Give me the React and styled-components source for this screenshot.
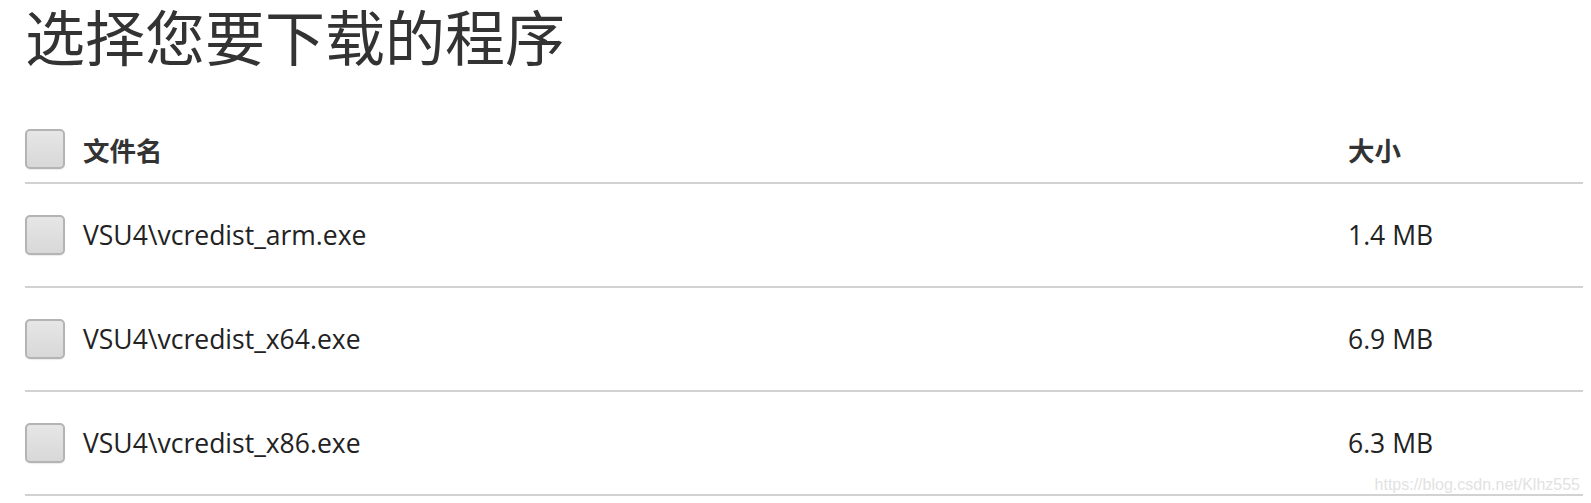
import React from 'react';
import styled, { createGlobalStyle } from 'styled-components';

const GlobalStyle = createGlobalStyle`
    html, body {
        margin: 0;
        padding: 0;
        background: #fff;
    }
    body {
        font-family: "Open Sans", "Noto Sans CJK SC", sans-serif;
        color: #222;
    }
`;

const Page = styled.div`
    position: relative;
    padding: 0 8px 0 25px;
    height: 503px;
    overflow: hidden;
`;

const Title = styled.h1`
    margin: 0;
    height: 116px;
    font-family: "Noto Sans CJK SC", sans-serif;
    font-weight: 400;
    font-size: 60px;
    line-height: 70px;
    color: #333;
`;

const Table = styled.div`
    display: flex;
    flex-direction: column;
`;

const Row = styled.div`
    display: grid;
    grid-template-columns: 58px 1fr 235px;
    align-items: center;
    height: ${props => (props.header ? '66px' : '102px')};
    border-bottom: 2px solid #d2d2d2;
`;

const Check = styled.span`
    display: block;
    box-sizing: border-box;
    width: 40px;
    height: 40px;
    border: 2px solid #b4b4b4;
    border-radius: 5px;
    background: linear-gradient(#e6e6e6, #d8d8d8);
    box-shadow: 0 1px 1px rgba(0, 0, 0, 0.08);
`;

const Cell = styled.span`
    font-size: 26.5px;
    font-weight: ${props => (props.header ? 700 : 400)};
    font-family: ${props => (props.header ? '"Noto Sans CJK SC", sans-serif' : '"Open Sans", sans-serif')};
    color: ${props => (props.header ? '#333' : '#222')};
`;

const Watermark = styled.div`
    position: absolute;
    right: 11px;
    bottom: 9px;
    font-family: "Liberation Sans", Arial, sans-serif;
    font-size: 16px;
    color: #e2e2e2;
`;

const files = [
    { name: 'VSU4\\vcredist_arm.exe', size: '1.4 MB' },
    { name: 'VSU4\\vcredist_x64.exe', size: '6.9 MB' },
    { name: 'VSU4\\vcredist_x86.exe', size: '6.3 MB' },
];

const App = () => {
    return (
        <Page>
            <GlobalStyle />
            <Title>选择您要下载的程序</Title>
            <Table>
                <Row header>
                    <Check />
                    <Cell header>文件名</Cell>
                    <Cell header>大小</Cell>
                </Row>
                {files.map(f => (
                    <Row key={f.name}>
                        <Check />
                        <Cell>{f.name}</Cell>
                        <Cell>{f.size}</Cell>
                    </Row>
                ))}
            </Table>
            <Watermark>https://blog.csdn.net/Klhz555</Watermark>
        </Page>
    );
};

export default App;
